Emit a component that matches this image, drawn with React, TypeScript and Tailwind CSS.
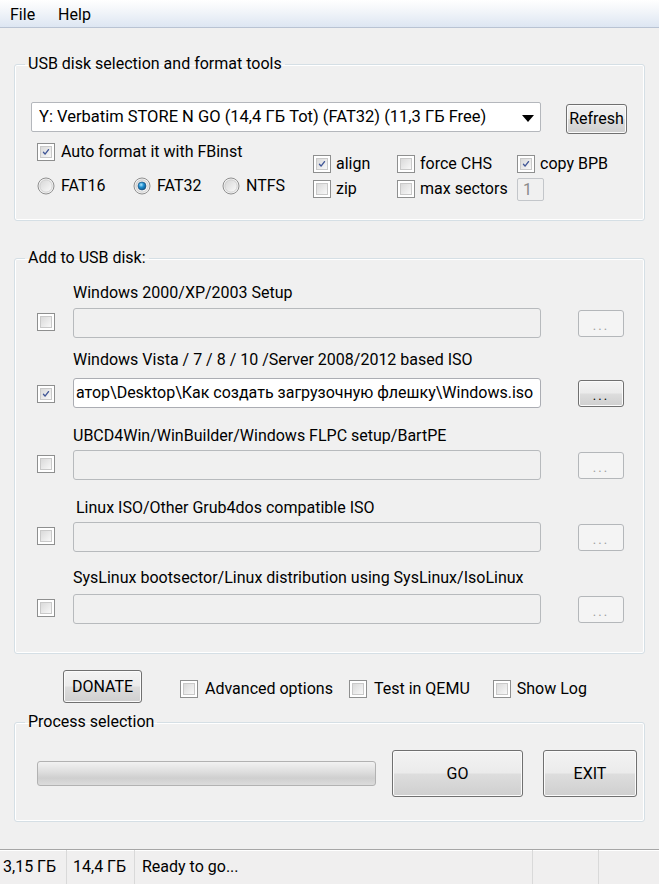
import React from "react";

const font = { fontFamily: "Roboto, 'Noto Sans', Arial, sans-serif" };

function CheckMark() {
  return (
    <svg viewBox="0 0 12 12" className="w-full h-full">
      <path
        d="M2.2 6.4 L4.6 9.2 L9.8 2.4"
        fill="none"
        stroke="#3f5596"
        strokeWidth="2"
        strokeLinecap="round"
        strokeLinejoin="round"
      />
    </svg>
  );
}

function Check({ checked = false }: { checked?: boolean }) {
  return (
    <span className="inline-flex w-[18px] h-[18px] shrink-0 border border-[#8e8f8f] bg-white p-[2px]">
      <span className="flex w-full h-full border border-[#c9c9c9] bg-gradient-to-br from-[#dadada] to-[#f8f8f8] p-[1px]">
        {checked && <CheckMark />}
      </span>
    </span>
  );
}

function Radio({ checked = false }: { checked?: boolean }) {
  return (
    <svg width="18" height="18" viewBox="0 0 18 18" className="shrink-0">
      <defs>
        <linearGradient id="rimG" x1="0" y1="0" x2="1" y2="1">
          <stop offset="0" stopColor="#d6d6d6" />
          <stop offset="1" stopColor="#fbfbfb" />
        </linearGradient>
        <radialGradient id="dotG" cx="0.4" cy="0.35" r="0.7">
          <stop offset="0" stopColor="#aee6ff" />
          <stop offset="0.45" stopColor="#1f8fcf" />
          <stop offset="1" stopColor="#0a4f86" />
        </radialGradient>
      </defs>
      <circle cx="9" cy="9" r="8" fill="#f4f4f4" stroke="#8f8f8f" strokeWidth="1" />
      <circle cx="9" cy="9" r="6.2" fill="url(#rimG)" stroke="#c8c8c8" strokeWidth="0.8" />
      {checked && <circle cx="9" cy="9" r="4" fill="url(#dotG)" stroke="#1d4f7c" strokeWidth="0.6" />}
    </svg>
  );
}

function WinButton({
  children,
  className = "",
}: {
  children: React.ReactNode;
  className?: string;
}) {
  return (
    <div
      className={`flex items-center justify-center rounded-[3px] border border-[#707070] bg-[linear-gradient(to_bottom,#f3f3f3_0%,#ebebeb_48%,#dddddd_52%,#cfcfcf_100%)] shadow-[inset_0_0_0_1px_#fbfbfb] text-black ${className}`}
    >
      {children}
    </div>
  );
}

function DotsButton({ enabled = false }: { enabled?: boolean }) {
  if (enabled) {
    return (
      <WinButton className="w-[46px] h-[27px]">
        <span className="text-[13px] tracking-[2px] leading-none mt-[4px]">...</span>
      </WinButton>
    );
  }
  return (
    <div className="flex items-center justify-center w-[46px] h-[27px] rounded-[3px] border border-[#b4b7ba] bg-[#f4f4f4]">
      <span className="text-[13px] tracking-[2px] leading-none mt-[4px] text-[#a0a0a0]">...</span>
    </div>
  );
}

function Group({
  title,
  className = "",
  children,
}: {
  title: string;
  className?: string;
  children: React.ReactNode;
}) {
  return (
    <fieldset
      className={`border border-[#d5dfe5] rounded-[3px] shadow-[inset_0_0_0_1px_#ffffff] ${className}`}
    >
      <legend className="ml-[10px] px-[3px] h-[20px] leading-[20px] text-[16px] text-black">
        {title}
      </legend>
      {children}
    </fieldset>
  );
}

type Row = {
  label: string;
  mt: string;
  gap: string;
  indent?: boolean;
  checked?: boolean;
  value?: string;
};

const rows: Row[] = [
  { label: "Windows 2000/XP/2003 Setup", mt: "mt-[15px]", gap: "mt-[5px]" },
  {
    label: "Windows Vista / 7 / 8 / 10 /Server 2008/2012 based ISO",
    mt: "mt-[12px]",
    gap: "mt-[8px]",
    checked: true,
    value: "атор\\Desktop\\Как создать загрузочную флешку\\Windows.iso",
  },
  { label: "UBCD4Win/WinBuilder/Windows FLPC setup/BartPE", mt: "mt-[18px]", gap: "mt-[4px]" },
  { label: "Linux ISO/Other Grub4dos compatible ISO", mt: "mt-[18px]", gap: "mt-[4px]", indent: true },
  {
    label: "SysLinux bootsector/Linux distribution using SysLinux/IsoLinux",
    mt: "mt-[16px]",
    gap: "mt-[6px]",
  },
];

export default function App() {
  return (
    <div
      className="w-[659px] h-[884px] bg-[#f0f0f0] text-black text-[16px] flex flex-col overflow-hidden"
      style={font}
    >
      {/* menu bar */}
      <div className="h-[28px] shrink-0 flex items-center gap-[23px] pl-[10px] pt-[3px] bg-[linear-gradient(to_bottom,#ffffff_0%,#f6f8fb_30%,#dde6f2_100%)] border-b border-[#b9c3d3]">
        <span>File</span>
        <span>Help</span>
      </div>

      <div className="flex-1 flex flex-col px-[14px]">
        {/* USB disk selection */}
        <Group title="USB disk selection and format tools" className="mt-[26px] pb-[21px]">
          <div className="flex items-start mt-[28px]">
            <div className="ml-[16px] w-[510px] h-[30px] flex items-center bg-white border border-[#b4b7bc] rounded-[2px] pl-[7px] pr-[6px]">
              <span className="flex-1 whitespace-nowrap overflow-hidden text-[16.5px]">
                Y: Verbatim STORE N GO (14,4 ГБ Tot) (FAT32) (11,3 ГБ Free)
              </span>
              <svg width="12" height="7" viewBox="0 0 12 7" className="mt-[2px]">
                <path d="M0 0 H12 L6 7 Z" fill="#000" />
              </svg>
            </div>
            <WinButton className="ml-[25px] mt-[2px] w-[61px] h-[30px]">Refresh</WinButton>
          </div>

          <div className="flex">
            <div className="ml-[22px] w-[276px] flex flex-col">
              <label className="mt-[8px] h-[20px] flex items-center gap-[6px]">
                <Check checked />
                <span>Auto format it with FBinst</span>
              </label>
              <div className="mt-[14px] h-[20px] flex items-center">
                <span className="flex items-center gap-[6px] w-[96px]">
                  <Radio />
                  FAT16
                </span>
                <span className="flex items-center gap-[6px] w-[89px]">
                  <Radio checked />
                  FAT32
                </span>
                <span className="flex items-center gap-[6px]">
                  <Radio />
                  NTFS
                </span>
              </div>
            </div>

            <div className="mt-[20px] grid grid-cols-[84px_120px_auto] grid-rows-[20px_20px] gap-y-[5px]">
              <span className="flex items-center gap-[5px]">
                <Check checked />
                align
              </span>
              <span className="flex items-center gap-[5px]">
                <Check />
                force CHS
              </span>
              <span className="flex items-center gap-[5px]">
                <Check checked />
                copy BPB
              </span>
              <span className="flex items-center gap-[5px]">
                <Check />
                zip
              </span>
              <span className="flex items-center gap-[5px]">
                <Check />
                max sectors
              </span>
              <span className="flex items-center">
                <span className="w-[27px] h-[23px] border border-[#c3c6ca] rounded-[2px] bg-[#f0f0f0] text-[#8a8a8a] pl-[5px] leading-[21px]">
                  1
                </span>
              </span>
            </div>
          </div>
        </Group>

        {/* Add to USB disk */}
        <Group title="Add to USB disk:" className="mt-[27px] pb-[29px]">
          {rows.map((r) => (
            <div key={r.label} className={`flex flex-col ${r.mt}`}>
              <div className={`h-[20px] leading-[20px] whitespace-nowrap ${r.indent ? "ml-[61px]" : "ml-[58px]"}`}>
                {r.label}
              </div>
              <div className={`flex items-center ${r.gap}`}>
                <span className="ml-[22px]">
                  <Check checked={r.checked} />
                </span>
                <div
                  className={`ml-[18px] w-[468px] h-[30px] rounded-[3px] border flex items-center overflow-hidden whitespace-nowrap ${
                    r.value ? "bg-white border-[#abadb3] pl-[2px]" : "bg-[#f0f0f0] border-[#b7babd]"
                  }`}
                >
                  {r.value}
                </div>
                <span className="ml-[37px]">
                  <DotsButton enabled={r.checked} />
                </span>
              </div>
            </div>
          ))}
        </Group>

        {/* options row */}
        <div className="mt-[16px] h-[33px] flex items-center">
          <WinButton className="ml-[49px] w-[79px] h-[33px]">DONATE</WinButton>
          <span className="ml-[38px] flex items-center gap-[7px] mt-[4px]">
            <Check />
            Advanced options
          </span>
          <span className="ml-[16px] flex items-center gap-[7px] mt-[4px]">
            <Check />
            Test in QEMU
          </span>
          <span className="ml-[23px] flex items-center gap-[6px] mt-[4px]">
            <Check />
            Show Log
          </span>
        </div>

        {/* Process selection */}
        <Group title="Process selection" className="mt-[9px] pb-[24px]">
          <div className="mt-[18px] flex items-center">
            <div className="ml-[22px] w-[339px] h-[25px] rounded-[3px] border border-[#b2b2b2] bg-[linear-gradient(to_bottom,#f2f2f2_0%,#e2e2e2_35%,#cfcfcf_70%,#dcdcdc_100%)]" />
            <WinButton className="ml-[16px] w-[131px] h-[47px]">GO</WinButton>
            <WinButton className="ml-[20px] w-[94px] h-[47px]">EXIT</WinButton>
          </div>
        </Group>
      </div>

      {/* status bar */}
      <div className="h-[35px] shrink-0 flex items-center border-t border-[#a6a6a6] bg-[#f0efef] shadow-[inset_0_1px_0_#ffffff]">
        <span className="w-[67px] h-full flex items-center pl-[3px] border-r border-[#d9d9d9]">3,15 ГБ</span>
        <span className="w-[68px] h-full flex items-center pl-[6px] border-r border-[#d9d9d9]">14,4 ГБ</span>
        <span className="flex-1 h-full flex items-center pl-[7px] border-r border-[#d9d9d9]">Ready to go...</span>
        <span className="w-[66px] h-full border-r border-[#d9d9d9]" />
        <span className="w-[60px] h-full" />
      </div>
    </div>
  );
}
